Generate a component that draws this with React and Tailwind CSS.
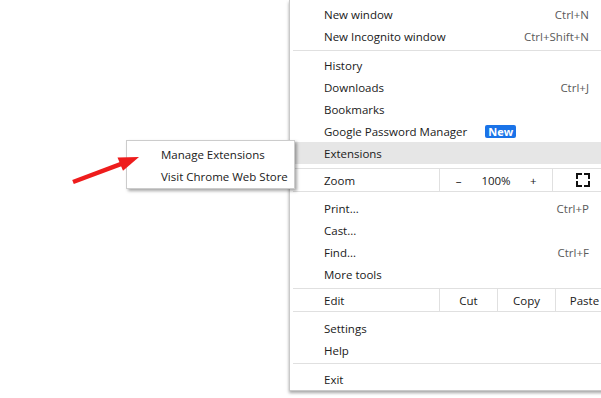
import React from "react";

function Item({ label, shortcut, highlight, badge }) {
  return (
    <div
      className={
        highlight
          ? "flex h-[22px] items-center pt-[2px] pl-[34px] pr-[24px] bg-[#e6e6e6]"
          : "flex h-[22px] items-center pt-[2px] pl-[34px] pr-[24px]"
      }
    >
      <span>{label}</span>
      {badge && (
        <span className="ml-[18px] -mt-[2px] flex h-[13px] items-center rounded-[2px] bg-[#1a73e8] px-[3px] text-[11px] font-bold leading-none text-white">
          {badge}
        </span>
      )}
      {shortcut && <span className="ml-auto text-[#5a5a5a]">{shortcut}</span>}
    </div>
  );
}

export default function App() {
  return (
    <div className="relative h-[398px] w-[601px] overflow-hidden bg-white font-['Open_Sans','Noto_Sans',sans-serif] text-[11.5px] text-[#202020]">
      {/* main menu */}
      <div className="absolute left-[289px] top-0 w-[324px] border-b border-l border-[#c9c9c9] bg-white pt-[3px] shadow-[0_2px_3px_rgba(0,0,0,0.35)]">
        <Item label="New window" shortcut="Ctrl+N" />
        <Item label="New Incognito window" shortcut="Ctrl+Shift+N" />
        <div className="pt-[3px] pb-[3px] pl-[3px]">
          <div className="h-px bg-[#e0e0e0]" />
        </div>
        <Item label="History" />
        <Item label="Downloads" shortcut="Ctrl+J" />
        <Item label="Bookmarks" />
        <Item label="Google Password Manager" badge="New" />
        <Item label="Extensions" highlight />
        <div className="mt-[4px] mb-[5px] ml-[3px] flex h-[24px] border-y border-[#e0e0e0]">
          <div className="flex w-[146px] items-center pt-[2px] pl-[31px]">Zoom</div>
          <div className="grid w-[113px] grid-cols-3 items-center border-l border-[#e0e0e0] pt-[2px] text-center">
            <span>–</span>
            <span>100%</span>
            <span>+</span>
          </div>
          <div className="flex flex-1 items-center justify-center border-l border-[#e0e0e0]">
            <svg width="14" height="14" viewBox="0 0 14 14" fill="none" stroke="#111" strokeWidth="2" strokeLinecap="square">
              <path d="M1 5V1h4M9 1h4v4M13 9v4H9M5 13H1V9" />
            </svg>
          </div>
        </div>
        <Item label="Print..." shortcut="Ctrl+P" />
        <Item label="Cast..." />
        <Item label="Find..." shortcut="Ctrl+F" />
        <Item label="More tools" />
        <div className="mt-[3px] mb-[5px] ml-[3px] flex h-[24px] border-y border-[#e0e0e0]">
          <div className="flex w-[146px] items-center pt-[2px] pl-[31px]">Edit</div>
          <div className="flex w-[58px] items-center justify-center border-l border-[#e0e0e0] pt-[2px]">Cut</div>
          <div className="flex w-[58px] items-center justify-center border-l border-[#e0e0e0] pt-[2px]">Copy</div>
          <div className="flex w-[58px] items-center justify-center border-l border-[#e0e0e0] pt-[2px]">Paste</div>
        </div>
        <Item label="Settings" />
        <Item label="Help" />
        <div className="pt-[2px] pb-[4px] pl-[3px]">
          <div className="h-px bg-[#e0e0e0]" />
        </div>
        <Item label="Exit" />
      </div>

      {/* submenu */}
      <div className="absolute left-[126px] top-[140px] w-[169px] border border-[#cccccc] bg-white pt-[2px] pb-[1px] shadow-[2px_2px_3px_rgba(0,0,0,0.35)]">
        <div className="flex h-[22px] items-center pt-[2px] pl-[34px]">Manage Extensions</div>
        <div className="flex h-[22px] items-center pt-[2px] pl-[34px]">Visit Chrome Web Store</div>
      </div>

      {/* arrow */}
      <svg className="pointer-events-none absolute left-0 top-0" width="601" height="398" viewBox="0 0 601 398">
        <line x1="73" y1="182" x2="122" y2="163.6" stroke="#ee1c1c" strokeWidth="4.5" strokeLinecap="butt" />
        <polygon points="139,157 117.5,157.4 123,170.8" fill="#ee1c1c" />
      </svg>
    </div>
  );
}
